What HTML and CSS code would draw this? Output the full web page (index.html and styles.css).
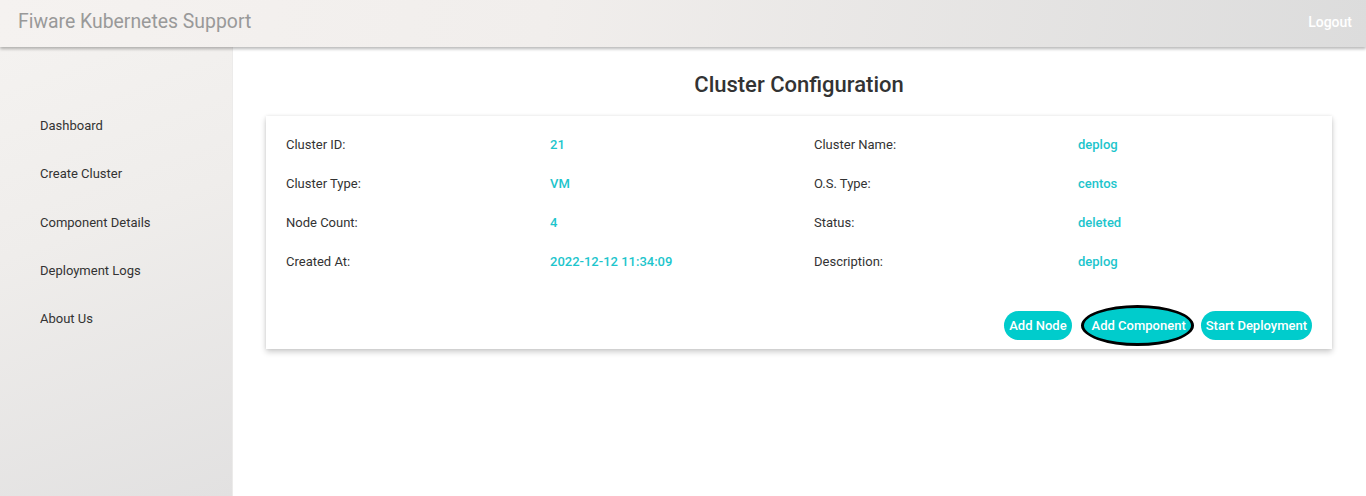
FILE: index.html
```html
<!DOCTYPE html>
<html lang="en">
<head>
<meta charset="utf-8">
<title>Fiware Kubernetes Support</title>
<link rel="stylesheet" href="styles.css">
</head>
<body>
<header class="topbar">
  <span class="brand">Fiware Kubernetes Support</span>
  <a class="logout" href="#">Logout</a>
</header>
<div class="layout">
  <nav class="sidebar">
    <a href="#">Dashboard</a>
    <a href="#">Create Cluster</a>
    <a href="#">Component Details</a>
    <a href="#">Deployment Logs</a>
    <a href="#">About Us</a>
  </nav>
  <main class="main">
    <h1 class="title">Cluster Configuration</h1>
    <section class="card">
      <div class="grid">
        <span class="label">Cluster ID:</span><span class="value">21</span>
        <span class="label">Cluster Name:</span><span class="value">deplog</span>
        <span class="label">Cluster Type:</span><span class="value">VM</span>
        <span class="label">O.S. Type:</span><span class="value">centos</span>
        <span class="label">Node Count:</span><span class="value">4</span>
        <span class="label">Status:</span><span class="value">deleted</span>
        <span class="label">Created At:</span><span class="value">2022-12-12 11:34:09</span>
        <span class="label">Description:</span><span class="value">deplog</span>
      </div>
      <div class="actions">
        <button class="btn">Add Node</button>
        <button class="btn btn-focus">Add Component</button>
        <button class="btn">Start Deployment</button>
      </div>
    </section>
  </main>
</div>
</body>
</html>
```

FILE: styles.css
```css
* { box-sizing: border-box; }
html, body { margin: 0; height: 100%; }
body {
  font-family: Roboto, "Liberation Sans", Arial, sans-serif;
  background: #fff;
  color: #333;
  overflow: hidden;
}
.topbar {
  position: relative;
  z-index: 2;
  height: 47px;
  display: flex;
  align-items: center;
  justify-content: space-between;
  padding: 0 14px 0 18px;
  background: linear-gradient(100deg, #f5f2f0 0%, #f1eeec 40%, #dcdcdc 100%);
  box-shadow: 0 2px 3px rgba(0,0,0,0.28);
}
.brand {
  font-size: 19.4px;
  color: #999;
  margin-top: -4px;
}
.logout {
  color: #fff;
  font-size: 14px;
  font-weight: 500;
  text-decoration: none;
  margin-top: -3px;
}
.layout {
  display: flex;
  height: calc(100% - 47px);
}
.sidebar {
  width: 233px;
  flex: none;
  display: flex;
  flex-direction: column;
  padding: 71px 0 0 40px;
  gap: 33.25px;
  background: linear-gradient(160deg, #f4f2f0 0%, #efedeb 40%, #e2e1e1 100%);
  border-right: 1px solid #ecebea;
}
.sidebar a {
  font-size: 13px;
  line-height: 15px;
  color: #333;
  text-decoration: none;
}
.main {
  flex: 1;
  padding: 0 34px 0 33px;
}
.title {
  margin: 25px 0 0;
  text-align: center;
  font-size: 22px;
  line-height: 26px;
  font-weight: 500;
  color: #333;
}
.card {
  margin-top: 18px;
  background: #fff;
  box-shadow: 0 3px 6px rgba(0,0,0,0.2), 0 0 3px rgba(0,0,0,0.08);
  padding: 19px 20px 9px;
}
.grid {
  display: grid;
  grid-template-columns: 264px 264px 264px 1fr;
  row-gap: 20px;
  font-size: 13px;
  line-height: 19px;
}
.label { color: #333; }
.value { color: #1dc5cc; font-weight: 500; }
.actions {
  margin-top: 40px;
  display: flex;
  justify-content: flex-end;
  align-items: center;
  gap: 12px;
}
.btn {
  position: relative;
  z-index: 0;
  height: 29px;
  border: 0;
  border-radius: 15px;
  padding: 0 5px;
  background: #00cccc;
  color: #fff;
  font-family: inherit;
  font-size: 13px;
  font-weight: 500;
  cursor: pointer;
}
.btn-focus {
  background: transparent;
  margin: 0 -2px 0 3px;
}
.btn-focus::before {
  content: "";
  position: absolute;
  z-index: -1;
  inset: -6px -3px -6px -6px;
  border: 3px solid #000;
  border-radius: 50%;
  background: #00cccc;
}
```
